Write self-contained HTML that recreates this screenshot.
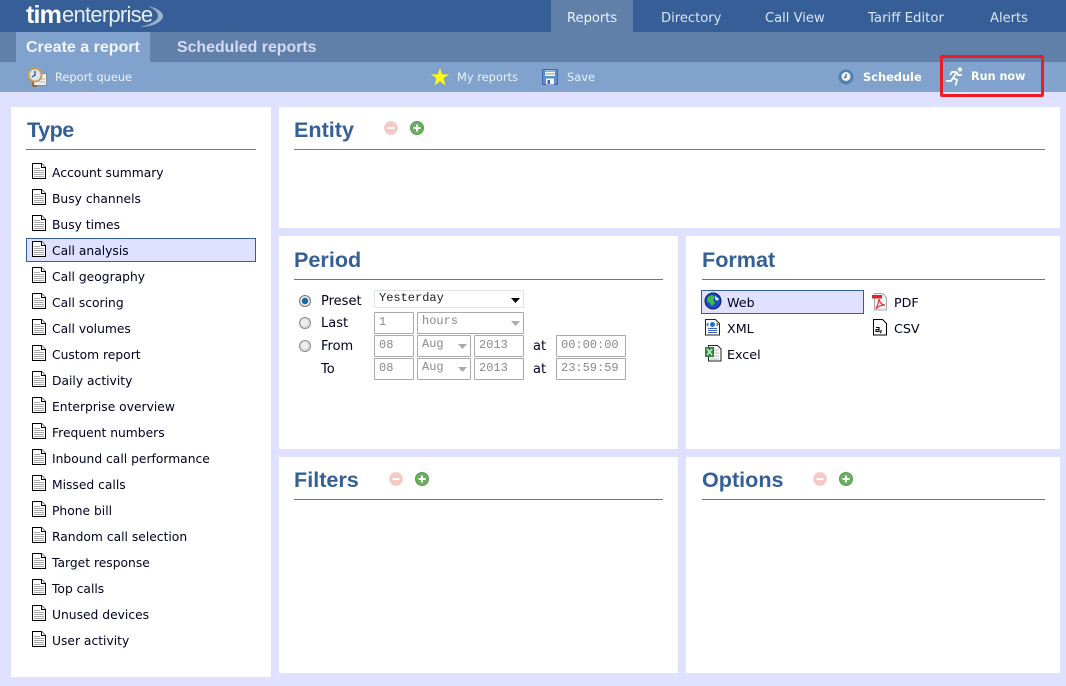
<!DOCTYPE html>
<html><head><meta charset="utf-8">
<style>
html,body{margin:0;padding:0}
body{width:1066px;height:686px;background:#e0e0ff;position:relative;overflow:hidden;font-family:"DejaVu Sans","Liberation Sans",sans-serif;font-size:13px;color:#000}
.a{position:absolute;white-space:nowrap}
.t{position:absolute;white-space:nowrap;line-height:16px}
.l{font-size:12.3px;color:#000020}
.f{font-size:12.7px;color:#000020}
.h{position:absolute;white-space:nowrap;font:bold 21.6px/26px "Liberation Sans",sans-serif;color:#355f96}
.p{position:absolute;background:#fff}
.r{position:absolute;height:1px;background:#5b7cab}
.n{position:absolute;white-space:nowrap;color:#d9e6f7;font-size:13.1px;line-height:16px;top:11px}
.b{position:absolute;white-space:nowrap;color:#edf2fb;font-size:11.4px;line-height:14px;top:70px}
.i{position:absolute;box-sizing:border-box;height:22px;border:1px solid #aaa;background:#fff;color:#888;font:12px/18px "Liberation Mono",monospace;padding-left:4px;border-radius:1px}
svg{position:absolute;overflow:visible}
</style></head><body>
<svg width="0" height="0" style="position:absolute"><defs>
<symbol id="doc" viewBox="0 0 16 17"><path d="M1.500.5H10.500L14.500 4.500V15.500H1.500Z" fill="#fff" stroke="#000"/><path d="M10.500.5V4.500H14.500" fill="#fff" stroke="#000"/><path d="M3 5.500H9M3 7.500H13M3 9.500H13M3 11.500H13M3 13.500H13" stroke="#aaa"/></symbol>
<symbol id="minus" viewBox="0 0 16 16"><circle cx="8" cy="8" r="6.500" fill="#f6c9c5" stroke="#f0d5d2"/><rect x="4.500" y="7" width="7" height="2" fill="#fff"/></symbol>
<symbol id="plus" viewBox="0 0 16 16"><circle cx="8" cy="8" r="6.500" fill="#69b05f" stroke="#5c9a58"/><path d="M8 4.500V11.500M4.500 8H11.500" stroke="#fff" stroke-width="2"/></symbol>
<symbol id="radio" viewBox="0 0 14 14"><circle cx="7" cy="7" r="5.500" fill="#ddd" stroke="#8a8a8a"/><circle cx="6.500" cy="6.500" r="3.500" fill="#eee"/></symbol>
</defs></svg>

<div class="a" style="left:0;top:0;width:1066px;height:32px;background:#355f96"></div>
<div class="a" style="left:0;top:32px;width:1066px;height:30px;background:#6080aa"></div>
<div class="a" style="left:0;top:62px;width:1066px;height:30px;background:#80a2cc"></div>

<svg style="left:140px;top:6px" width="24" height="22" viewBox="0 0 24 22"><path d="M8 0C17 2 23 6 23 10C23 16 12 21 0 21C9 19 18 15 18 10C18 6 14 3 8 0Z" fill="#9db2ce"/></svg>
<div class="a" style="left:26px;top:0;font:bold 25px/30px 'Liberation Sans',sans-serif;color:#fff;letter-spacing:-.8px">tim</div>
<div class="a" style="left:62px;top:0;font:22px/30px 'Liberation Sans',sans-serif;color:#e6edf6;letter-spacing:-.75px">enterprise</div>

<div class="a" style="left:551px;top:0;width:82px;height:32px;background:#6080aa"></div>
<div class="n" style="left:567px;color:#eef3fb">Reports</div>
<div class="n" style="left:661px">Directory</div>
<div class="n" style="left:765px">Call View</div>
<div class="n" style="left:868px;font-size:13.3px">Tariff Editor</div>
<div class="n" style="left:990px">Alerts</div>

<div class="a" style="left:16px;top:32px;width:134px;height:30px;background:#80a2cc"></div>
<div class="a" style="left:26px;top:38px;font:bold 16px/19px 'Liberation Sans',sans-serif;color:#f2f5fb">Create a report</div>
<div class="a" style="left:177px;top:38px;font:bold 15.9px/19px 'Liberation Sans',sans-serif;color:#d5daf8">Scheduled reports</div>

<svg style="left:27px;top:67px" width="21" height="21" viewBox="0 0 21 21"><rect x="6.500" y="6.500" width="13" height="12" fill="#f0f0ee" stroke="#8b8b8b"/><path d="M12 12H18M12 15H18" stroke="#9fb4d4"/><path d="M6 15V19H10" stroke="#9a5a2a" stroke-width="1.500" fill="none"/><circle cx="8" cy="8" r="6.500" fill="#dce6f3" stroke="#c89f5a" stroke-width="2"/><path d="M8 4V8L5 10" stroke="#2c5080" stroke-width="1.300" fill="none"/></svg>
<div class="b" style="left:55px;">Report queue</div>

<svg style="left:431px;top:68px" width="18" height="18" viewBox="0 0 18 18"><path d="M9 0L11.200 6.400H18L12.500 10.400L14.600 17.500L9 13.200L3.400 17.500L5.500 10.400L0 6.400H6.800Z" fill="#fbfb14"/></svg>
<div class="b" style="left:457px;">My reports</div>
<svg style="left:542px;top:69px" width="16" height="16" viewBox="0 0 16 16"><rect x=".5" y=".5" width="15" height="15" rx="1" fill="#5f8ed0" stroke="#3e68aa"/><rect x="3" y="1.500" width="10" height="5.500" fill="#fff"/><path d="M3 2.500H13M3 5H13" stroke="#8dbb82" stroke-width="1.300"/><rect x="4" y="9.500" width="8" height="6" fill="#f4f6fa"/><rect x="5.500" y="11" width="2.500" height="4" fill="#3e68aa"/></svg>
<div class="b" style="left:567px;">Save</div>

<svg style="left:838px;top:69px" width="16" height="16" viewBox="0 0 16 16"><circle cx="8" cy="8" r="7.500" fill="#4f82b0"/><circle cx="8" cy="7.500" r="4.500" fill="#eef3f8"/><path d="M8 5V8L6 9" stroke="#234" fill="none"/></svg>
<div class="b" style="left:863px;color:#fff;font-weight:bold">Schedule</div>
<svg style="left:945px;top:67px" width="18" height="19" viewBox="0 0 18 19"><circle cx="15" cy="2.500" r="2" fill="#fff"/><path d="M12 5L8 11L6 14H1M12 5H7L5 8M12 5L13 8H17M8 11L12 13L10.500 18.500" stroke="#fff" stroke-width="1.700" fill="none"/></svg>
<div class="b" style="left:971px;color:#fff;font-weight:bold;font-size:11.2px">Run now</div>
<div class="a" style="left:940px;top:55px;width:104px;height:42px;box-sizing:border-box;border:3px solid #ed1c24;border-radius:2px"></div>

<!-- panels -->
<div class="p" style="left:11px;top:107px;width:260px;height:570px"></div>
<div class="p" style="left:279px;top:107px;width:781px;height:121px"></div>
<div class="p" style="left:279px;top:236px;width:399px;height:213px"></div>
<div class="p" style="left:686px;top:236px;width:374px;height:213px"></div>
<div class="p" style="left:279px;top:457px;width:399px;height:216px"></div>
<div class="p" style="left:686px;top:457px;width:374px;height:216px"></div>

<!-- Type -->
<div class="h" style="left:27px;top:117px;letter-spacing:-.5px">Type</div>
<div class="r" style="left:26px;top:149px;width:230px"></div>
<div class="a" style="left:26px;top:238px;width:230px;height:24px;box-sizing:border-box;background:#e0e0ff;border:1px solid #355f96"></div>
<svg style="left:31px;top:163px" width="16" height="17"><use href="#doc"/></svg><div class="t l" style="left:52px;top:165px">Account summary</div>
<svg style="left:31px;top:189px" width="16" height="17"><use href="#doc"/></svg><div class="t l" style="left:52px;top:191px">Busy channels</div>
<svg style="left:31px;top:215px" width="16" height="17"><use href="#doc"/></svg><div class="t l" style="left:52px;top:217px">Busy times</div>
<svg style="left:31px;top:241px" width="16" height="17"><use href="#doc"/></svg><div class="t l" style="left:52px;top:243px">Call analysis</div>
<svg style="left:31px;top:267px" width="16" height="17"><use href="#doc"/></svg><div class="t l" style="left:52px;top:269px">Call geography</div>
<svg style="left:31px;top:293px" width="16" height="17"><use href="#doc"/></svg><div class="t l" style="left:52px;top:295px">Call scoring</div>
<svg style="left:31px;top:319px" width="16" height="17"><use href="#doc"/></svg><div class="t l" style="left:52px;top:321px">Call volumes</div>
<svg style="left:31px;top:345px" width="16" height="17"><use href="#doc"/></svg><div class="t l" style="left:52px;top:347px">Custom report</div>
<svg style="left:31px;top:371px" width="16" height="17"><use href="#doc"/></svg><div class="t l" style="left:52px;top:373px">Daily activity</div>
<svg style="left:31px;top:397px" width="16" height="17"><use href="#doc"/></svg><div class="t l" style="left:52px;top:399px">Enterprise overview</div>
<svg style="left:31px;top:423px" width="16" height="17"><use href="#doc"/></svg><div class="t l" style="left:52px;top:425px">Frequent numbers</div>
<svg style="left:31px;top:449px" width="16" height="17"><use href="#doc"/></svg><div class="t l" style="left:52px;top:451px">Inbound call performance</div>
<svg style="left:31px;top:475px" width="16" height="17"><use href="#doc"/></svg><div class="t l" style="left:52px;top:477px">Missed calls</div>
<svg style="left:31px;top:501px" width="16" height="17"><use href="#doc"/></svg><div class="t l" style="left:52px;top:503px">Phone bill</div>
<svg style="left:31px;top:527px" width="16" height="17"><use href="#doc"/></svg><div class="t l" style="left:52px;top:529px">Random call selection</div>
<svg style="left:31px;top:553px" width="16" height="17"><use href="#doc"/></svg><div class="t l" style="left:52px;top:555px">Target response</div>
<svg style="left:31px;top:579px" width="16" height="17"><use href="#doc"/></svg><div class="t l" style="left:52px;top:581px">Top calls</div>
<svg style="left:31px;top:605px" width="16" height="17"><use href="#doc"/></svg><div class="t l" style="left:52px;top:607px">Unused devices</div>
<svg style="left:31px;top:631px" width="16" height="17"><use href="#doc"/></svg><div class="t l" style="left:52px;top:633px">User activity</div>

<!-- Entity -->
<div class="h" style="left:294px;top:117px">Entity</div>
<div class="r" style="left:294px;top:149px;width:751px"></div>
<svg style="left:383px;top:120px" width="16" height="16"><use href="#minus"/></svg>
<svg style="left:409px;top:120px" width="16" height="16"><use href="#plus"/></svg>

<!-- Period -->
<div class="h" style="left:294px;top:247px">Period</div>
<div class="r" style="left:294px;top:279px;width:369px"></div>
<svg style="left:298px;top:294px" width="14" height="14" viewBox="0 0 14 14"><circle cx="7" cy="7" r="5.500" fill="#e8e8e8" stroke="#777"/><circle cx="7" cy="7" r="3.200" fill="#1d6a9c"/></svg>
<svg style="left:298px;top:316px" width="14" height="14"><use href="#radio"/></svg>
<svg style="left:298px;top:339px" width="14" height="14"><use href="#radio"/></svg>
<div class="t" style="left:321px;top:294px;color:#000020">Preset</div>
<div class="t" style="left:321px;top:316px;color:#000020">Last</div>
<div class="t" style="left:321px;top:339px;color:#000020">From</div>
<div class="t" style="left:321px;top:362px;color:#000020">To</div>

<div class="i" style="left:374px;top:290px;width:150px;height:18px;line-height:15px;border-color:#dfe3ee;color:#222">Yesterday</div>
<svg style="left:511px;top:298px" width="10" height="5"><path d="M0 0H9L4.500 5Z" fill="#000"/></svg>

<div class="i" style="left:374px;top:312px;width:40px">1</div>
<div class="i" style="left:417px;top:312px;width:107px;line-height:16px">hours</div>
<svg style="left:511px;top:321px" width="10" height="5"><path d="M0 0H9L4.500 5Z" fill="#aaa"/></svg>

<div class="i" style="left:374px;top:335px;width:40px">08</div>
<div class="i" style="left:417px;top:335px;width:54px;line-height:16px">Aug</div>
<svg style="left:458px;top:344px" width="10" height="5"><path d="M0 0H9L4.500 5Z" fill="#aaa"/></svg>
<div class="i" style="left:474px;top:335px;width:50px">2013</div>
<div class="t" style="left:533px;top:339px;color:#000020">at</div>
<div class="i" style="left:556px;top:335px;width:70px">00:00:00</div>

<div class="i" style="left:374px;top:358px;width:40px">08</div>
<div class="i" style="left:417px;top:358px;width:54px;line-height:16px">Aug</div>
<svg style="left:458px;top:367px" width="10" height="5"><path d="M0 0H9L4.500 5Z" fill="#aaa"/></svg>
<div class="i" style="left:474px;top:358px;width:50px">2013</div>
<div class="t" style="left:533px;top:362px;color:#000020">at</div>
<div class="i" style="left:556px;top:358px;width:70px">23:59:59</div>

<!-- Format -->
<div class="h" style="left:702px;top:247px">Format</div>
<div class="r" style="left:702px;top:279px;width:343px"></div>
<div class="a" style="left:701px;top:290px;width:163px;height:24px;box-sizing:border-box;background:#e0e0ff;border:1px solid #355f96"></div>
<svg style="left:704px;top:292px" width="18" height="18" viewBox="0 0 18 18"><circle cx="9" cy="9" r="8" fill="#1c4fc4" stroke="#0a1c55"/><path d="M4 5L8 3L11 5L9 8L11 11L8 14L6 11L3 9Z" fill="#3fbf3f"/><path d="M11 4L15 7L13 9L11 7Z" fill="#e8e8f8"/></svg>
<div class="t f" style="left:727px;top:295px">Web</div>
<svg style="left:704px;top:319px" width="17" height="17" viewBox="0 0 17 17"><path d="M1.500.5H11.500L15.500 4.500V16H1.500Z" fill="#fff" stroke="#222"/><path d="M4 9.500H13M4 11.500H13M4 13.500H13" stroke="#3f64b0"/><ellipse cx="8.500" cy="5.500" rx="2.500" ry="2.500" fill="#1c6fd4"/><path d="M4.500 4L3 5.500L4.500 7M12.500 4L14 5.500L12.500 7" stroke="#1c4fa4" fill="none"/></svg>
<div class="t f" style="left:727px;top:321px">XML</div>
<svg style="left:704px;top:345px" width="18" height="17" viewBox="0 0 18 17"><path d="M4.500.5H13.500L17 4V16H4.500Z" fill="#fff" stroke="#222"/><path d="M6 5H15M6 8H15M6 11H15M6 14H15" stroke="#bbb"/><path d="M1 2H10V12H1Z" fill="#2e8b3a"/><path d="M3 4L8 10M8 4L3 10" stroke="#cfe8cf" stroke-width="1.500"/></svg>
<div class="t f" style="left:727px;top:347px">Excel</div>
<svg style="left:871px;top:293px" width="17" height="18" viewBox="0 0 17 18"><path d="M3.500.5H11.500L15.500 4.500V17H3.500Z" fill="#f2f2f2" stroke="#aaa"/><rect x="1" y="2" width="10" height="3.500" fill="#d8262c"/><path d="M5 16C7 11 8 8 8 6C9 10 11 12 14 12C10 12 7 13 5 16Z" fill="none" stroke="#d8262c"/></svg>
<div class="t f" style="left:894px;top:295px">PDF</div>
<svg style="left:872px;top:319px" width="16" height="17" viewBox="0 0 16 17"><path d="M1.500.5H10.500L14.500 4.500V16H1.500Z" fill="#fff" stroke="#000"/><path d="M4 8.500H7V12.500H4V10.500H7M9 11V13L8 14" stroke="#000" stroke-width="1.100" fill="none"/></svg>
<div class="t f" style="left:894px;top:321px">CSV</div>

<!-- Filters -->
<div class="h" style="left:294px;top:467px">Filters</div>
<div class="r" style="left:294px;top:499px;width:369px"></div>
<svg style="left:388px;top:471px" width="16" height="16"><use href="#minus"/></svg>
<svg style="left:414px;top:471px" width="16" height="16"><use href="#plus"/></svg>

<!-- Options -->
<div class="h" style="left:702px;top:467px">Options</div>
<div class="r" style="left:702px;top:499px;width:343px"></div>
<svg style="left:812px;top:471px" width="16" height="16"><use href="#minus"/></svg>
<svg style="left:838px;top:471px" width="16" height="16"><use href="#plus"/></svg>
</body></html>
